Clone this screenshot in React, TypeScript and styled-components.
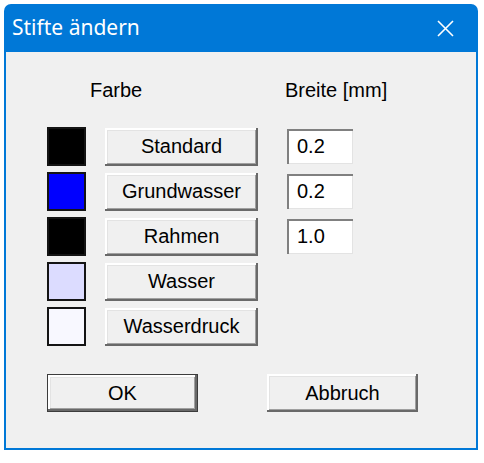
import React from 'react';
import styled, { createGlobalStyle } from 'styled-components';

const GlobalStyle = createGlobalStyle`
  html, body {
    margin: 0;
    padding: 0;
    background: #ffffff;
  }
`;

const Page = styled.div`
  padding: 4px 0 0 4px;
`;

const Window = styled.div`
  width: 474px;
  height: 446px;
  display: flex;
  flex-direction: column;
  background: #0078d7;
  border-radius: 7px 7px 0 0;
  box-sizing: border-box;
  padding: 0 2px 2px 2px;
`;

const TitleBar = styled.div`
  height: 48px;
  display: flex;
  align-items: center;
  justify-content: space-between;
  padding: 0 22px 0 6px;
  color: #ffffff;
  font-family: 'Noto Sans', 'Open Sans', sans-serif;
  font-size: 21px;
  flex-shrink: 0;
`;

const Title = styled.span`
  margin-top: -2px;
`;

const Client = styled.div`
  flex: 1;
  background: #f0f0f0;
  padding: 26px 0 0 41px;
  font-family: 'Liberation Sans', Arial, sans-serif;
  font-size: 20px;
  color: #000000;
`;

// swatch column, button column, width column
const Grid = styled.div`
  display: grid;
  grid-template-columns: 58px 182px 66px;
  row-gap: 6px;
  align-items: center;
`;

const Header = styled.div<{ $shift: number }>`
  height: 24px;
  line-height: 24px;
  margin-left: ${p => p.$shift}px;
  margin-bottom: 19px;
  white-space: nowrap;
`;

const Swatch = styled.div<{ $color: string }>`
  width: 39px;
  height: 39px;
  box-sizing: border-box;
  border: 2px solid #141414;
  background: ${p => p.$color};
`;

const PushButton = styled.button<{ $default?: boolean }>`
  width: 153px;
  height: 38px;
  box-sizing: border-box;
  padding: 0;
  margin: 0;
  background: #f0f0f0;
  font-family: 'Liberation Sans', Arial, sans-serif;
  font-size: 20px;
  color: #000000;
  border: ${p => (p.$default ? '1px solid #3c3c3c' : 'none')};
  box-shadow:
    inset -2px -2px 0 #696969,
    inset 2px 2px 0 #ffffff,
    inset -3px -3px 0 #a0a0a0,
    inset 3px 3px 0 #e3e3e3;
  cursor: default;
`;

const Field = styled.div`
  width: 66px;
  height: 35px;
  box-sizing: border-box;
  background: #ffffff;
  box-shadow:
    inset 2px 2px 0 #808080,
    inset -1px -1px 0 #e3e3e3;
  padding-left: 10px;
  display: flex;
  align-items: center;
`;

const Empty = styled.div``;

const Footer = styled.div`
  display: flex;
  gap: 69px;
  margin-top: 28px;

  ${PushButton} {
    width: 151px;
  }
`;

const pens = [
  { color: '#000000', name: 'Standard', width: '0.2' },
  { color: '#0000ff', name: 'Grundwasser', width: '0.2' },
  { color: '#000000', name: 'Rahmen', width: '1.0' },
  { color: '#dcdcff', name: 'Wasser' },
  { color: '#f8f8ff', name: 'Wasserdruck' },
];

function CloseIcon() {
  return (
    <svg width='17' height='17' viewBox='0 0 17 17'>
      <path d='M1 1 L16 16 M16 1 L1 16' stroke='#ffffff' strokeWidth='1.6' fill='none' />
    </svg>
  );
}

export default function App() {
  return (
    <Page>
      <GlobalStyle />
      <Window>
        <TitleBar>
          <Title>Stifte ändern</Title>
          <CloseIcon />
        </TitleBar>
        <Client>
          <Grid>
            <Empty />
            <Header $shift={-15}>Farbe</Header>
            <Header $shift={-2}>Breite [mm]</Header>
            {pens.map(pen => (
              <React.Fragment key={pen.name}>
                <Swatch $color={pen.color} />
                <PushButton type='button'>{pen.name}</PushButton>
                {pen.width ? <Field>{pen.width}</Field> : <Empty />}
              </React.Fragment>
            ))}
          </Grid>
          <Footer>
            <PushButton type='button' $default>
              OK
            </PushButton>
            <PushButton type='button'>Abbruch</PushButton>
          </Footer>
        </Client>
      </Window>
    </Page>
  );
}
